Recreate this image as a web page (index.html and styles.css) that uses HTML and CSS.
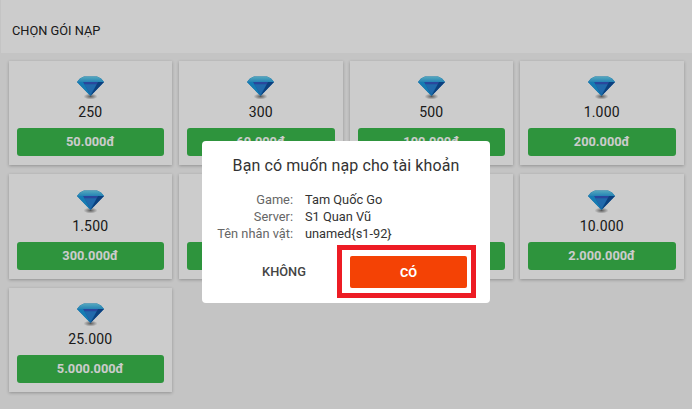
FILE: index.html
```html
<!DOCTYPE html>
<html lang="vi">
<head>
  <meta charset="UTF-8">
  <meta name="viewport" content="width=device-width, initial-scale=1.0">
  <title>Chọn gói nạp</title>
  <link rel="stylesheet" href="styles.css">
</head>
<body>
  <svg class="defs" width="0" height="0">
    <defs>
      <radialGradient id="gemShadow">
        <stop offset="0" stop-color="#444" stop-opacity=".75"/>
        <stop offset="1" stop-color="#444" stop-opacity="0"/>
      </radialGradient>
      <linearGradient id="gemTop" x1="0" y1="0" x2="0" y2="1">
        <stop offset="0" stop-color="#6ad4ee"/>
        <stop offset="1" stop-color="#2fa4e2"/>
      </linearGradient>
      <symbol id="gem" viewBox="0 0 27 24">
        <ellipse cx="13.5" cy="20.5" rx="7" ry="3" fill="url(#gemShadow)"/>
        <polygon points="7,0.5 20,0.5 24,2.5 27,6 13.5,20 0,6 3,2.5" fill="#1a80cc"/>
        <polygon points="7,0.5 20,0.5 24,2.5 27,6 0,6 3,2.5" fill="url(#gemTop)"/>
        <polygon points="6,6 21,6 19.5,8.5 7.5,8.5" fill="#3558c4"/>
        <polygon points="7.5,8.5 19.5,8.5 13.5,18" fill="#2a84d8"/>
        <polygon points="0,6 6,6 13.5,20" fill="#1c9be0"/>
        <polygon points="27,6 21,6 13.5,20" fill="#0f4f9e"/>
      </symbol>
    </defs>
  </svg>

  <div class="page">
    <div class="page-header">CHỌN GÓI NẠP</div>

    <div class="packs">
      <div class="pack">
        <svg class="gem"><use href="#gem"/></svg>
        <div class="amount">250</div>
        <div class="price">50.000đ</div>
      </div>
      <div class="pack">
        <svg class="gem"><use href="#gem"/></svg>
        <div class="amount">300</div>
        <div class="price">60.000đ</div>
      </div>
      <div class="pack">
        <svg class="gem"><use href="#gem"/></svg>
        <div class="amount">500</div>
        <div class="price">100.000đ</div>
      </div>
      <div class="pack">
        <svg class="gem"><use href="#gem"/></svg>
        <div class="amount">1.000</div>
        <div class="price">200.000đ</div>
      </div>
      <div class="pack">
        <svg class="gem"><use href="#gem"/></svg>
        <div class="amount">1.500</div>
        <div class="price">300.000đ</div>
      </div>
      <!-- these two sit behind the dialog -->
      <div class="pack">
        <svg class="gem"><use href="#gem"/></svg>
        <div class="amount"></div>
        <div class="price"></div>
      </div>
      <div class="pack">
        <svg class="gem"><use href="#gem"/></svg>
        <div class="amount"></div>
        <div class="price"></div>
      </div>
      <div class="pack">
        <svg class="gem"><use href="#gem"/></svg>
        <div class="amount">10.000</div>
        <div class="price">2.000.000đ</div>
      </div>
      <div class="pack">
        <svg class="gem"><use href="#gem"/></svg>
        <div class="amount">25.000</div>
        <div class="price">5.000.000đ</div>
      </div>
    </div>
  </div>

  <div class="overlay">
    <div class="modal">
      <h3 class="modal-title">Bạn có muốn nạp cho tài khoản</h3>
      <div class="info">
        <div class="info-label">Game:</div>
        <div>Tam Quốc Go</div>
        <div class="info-label">Server:</div>
        <div>S1 Quan Vũ</div>
        <div class="info-label">Tên nhân vật:</div>
        <div>unamed{s1-92}</div>
      </div>
      <div class="modal-actions">
        <button class="btn-no">KHÔNG</button>
        <div class="highlight">
          <button class="btn-yes">CÓ</button>
        </div>
      </div>
    </div>
  </div>
</body>
</html>
```

FILE: styles.css
```css
* {
  box-sizing: border-box;
}
html, body {
  margin: 0;
  height: 100%;
  overflow: hidden;
}
body {
  font-family: Roboto, "Liberation Sans", sans-serif;
  background: #f5f5f5;
  color: #222;
}
.defs {
  position: absolute;
}
.page-header {
  height: 53px;
  margin-left: 1px;
  padding-left: 11px;
  background: #fff;
  font-size: 12.8px;
  line-height: 61px;
}
.packs {
  display: grid;
  grid-template-columns: repeat(4, 1fr);
  grid-auto-rows: 104.5px;
  column-gap: 7px;
  row-gap: 9px;
  padding: 7.5px 8.5px 0;
}
.pack {
  background: #fff;
  box-shadow: 0 1px 3px rgba(0, 0, 0, 0.25);
  padding: 15.5px 8px 0;
  text-align: center;
}
.gem {
  display: block;
  width: 27px;
  height: 24px;
  margin: 0 auto;
}
.amount {
  min-height: 16px;
  font-size: 14px;
  line-height: 16px;
  margin-top: 4px;
  letter-spacing: 0.2px;
}
.price {
  height: 28px;
  margin-top: 8px;
  background: #3aba4d;
  border-radius: 3px;
  color: #fff;
  font-size: 12.8px;
  font-weight: 700;
  line-height: 28px;
}
.overlay {
  position: fixed;
  inset: 0;
  background: rgba(0, 0, 0, 0.2);
  display: flex;
  justify-content: center;
  padding-top: 141px;
}
.modal {
  width: 288px;
  height: 162px;
  background: #fff;
  border-radius: 4px;
  padding-top: 15px;
}
.modal-title {
  margin: 0;
  font-size: 16px;
  font-weight: 400;
  line-height: 20px;
  letter-spacing: 0.1px;
  text-align: center;
  color: #333;
}
.info {
  display: grid;
  grid-template-columns: 91px 1fr;
  column-gap: 12px;
  margin-top: 15px;
  font-size: 12.8px;
  line-height: 17px;
  color: #333;
}
.info-label {
  text-align: right;
  color: #666;
}
.modal-actions {
  display: flex;
  align-items: center;
  margin-top: 3px;
  height: 53px;
}
.btn-no {
  width: 136px;
  height: 32px;
  padding: 0 0 0 28px;
  border: none;
  background: none;
  font-family: inherit;
  font-size: 12.8px;
  font-weight: 500;
  color: #444;
}
.highlight {
  margin-left: -1px;
  width: 139px;
  height: 53px;
  border: 5px solid #ed1c24;
  padding: 6px 8px;
}
.btn-yes {
  display: block;
  width: 117px;
  height: 32px;
  border: none;
  border-radius: 2px;
  background: #f44205;
  color: #fff;
  font-family: inherit;
  font-size: 12.8px;
  font-weight: 700;
}
```
